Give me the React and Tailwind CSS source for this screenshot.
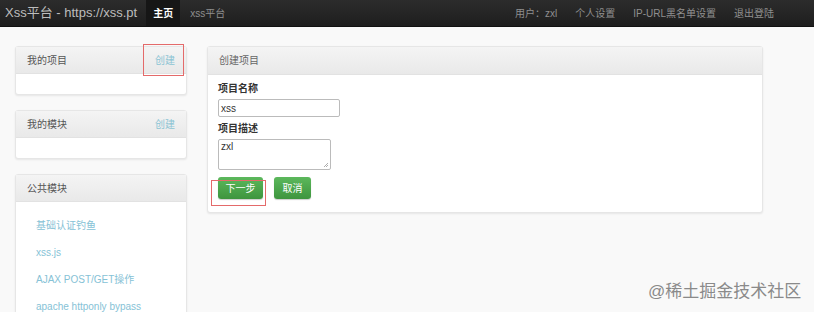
import React from "react";

const font = { fontFamily: '"Liberation Sans", "Noto Sans CJK SC", sans-serif' };

function Panel({ title, action, boxed, children, bodyClass }) {
  return (
    <div className="relative rounded-[3px] border border-[#e6e6e6] bg-white shadow-[0_1px_2px_rgba(0,0,0,0.08)]">
      <div className="flex h-[27px] items-center justify-between border-b border-[#e2e2e2] bg-gradient-to-b from-[#f4f4f4] to-[#e9e9e9] px-[11px] text-[10px] text-[#555]">
        <span>{title}</span>
        {action && <span className="text-[#8cc4d4]">{action}</span>}
      </div>
      <div className={bodyClass}>{children}</div>
      {boxed && (
        <div className="absolute left-[127px] top-[-3px] h-[32px] w-[41px] border border-[#e46a6a]" />
      )}
    </div>
  );
}

export default function App() {
  return (
    <div className="relative h-[312px] w-[814px] overflow-hidden bg-[#f9f9f9]" style={font}>
      <div className="flex h-[27px] items-center border-b border-[#111] bg-gradient-to-b from-[#2c2c2c] to-[#1e1e1e]">
        <div className="pl-[5px] pr-[7px] text-[13px] text-[#bdbdbd]">Xss平台 - https://xss.pt</div>
        <div className="ml-[2px] flex h-full w-[34px] items-center justify-center bg-[#161616] text-[10px] font-bold text-white">主页</div>
        <div className="ml-[10px] text-[10px] text-[#8f8f8f]">xss平台</div>
        <div className="ml-auto mr-[40px] flex items-center gap-[18px] text-[10px] text-[#8f8f8f]">
          <span>用户：zxl</span>
          <span>个人设置</span>
          <span>IP-URL黑名单设置</span>
          <span>退出登陆</span>
        </div>
      </div>

      <div className="flex gap-[20px] pl-[15px] pt-[19px]">
        <div className="flex w-[172px] flex-col gap-[15px]">
          <Panel title="我的项目" action="创建" boxed bodyClass="h-[20px]" />
          <Panel title="我的模块" action="创建" bodyClass="h-[20px]" />
          <Panel title="公共模块" bodyClass="flex flex-col gap-[12px] pl-[20px] pt-[16px] pb-4 text-[10px] text-[#86c2d6]">
            <span>基础认证钓鱼</span>
            <span>xss.js</span>
            <span>AJAX POST/GET操作</span>
            <span>apache httponly bypass</span>
          </Panel>
        </div>

        <div className="relative h-[167px] w-[556px] rounded-[3px] border border-[#e6e6e6] bg-white shadow-[0_1px_2px_rgba(0,0,0,0.08)]">
          <div className="flex h-[28px] items-center border-b border-[#e2e2e2] bg-gradient-to-b from-[#f4f4f4] to-[#e9e9e9] px-[11px] text-[10px] text-[#666]">
            创建项目
          </div>
          <div className="flex flex-col px-[10px] pt-[6px]">
            <label className="text-[10px] font-bold text-[#333]">项目名称</label>
            <div className="mt-[3px] flex h-[18px] w-[122px] items-center rounded-[2px] border border-[#bbb] px-[2px] text-[10px] text-[#333]">xss</div>
            <label className="mt-[4px] text-[10px] font-bold text-[#333]">项目描述</label>
            <div className="relative mt-[3px] h-[31px] w-[113px] rounded-[2px] border border-[#bbb] px-[2px] text-[10px] leading-[13px] text-[#333]">
              zxl
              <svg className="absolute bottom-[1px] right-[1px]" width="6" height="6" viewBox="0 0 6 6">
                <path d="M5 1L1 5M5 3L3 5" stroke="#999" strokeWidth="0.8" />
              </svg>
            </div>
            <div className="relative mt-[7px] flex gap-[11px]">
              <div className="flex h-[22px] w-[45px] items-center justify-center rounded-[3px] bg-gradient-to-b from-[#5cb85c] to-[#3e953e] text-[10px] text-white shadow-[0_1px_1px_rgba(0,0,0,0.2)]">下一步</div>
              <div className="flex h-[22px] w-[37px] items-center justify-center rounded-[3px] bg-gradient-to-b from-[#5cb85c] to-[#3e953e] text-[10px] text-white shadow-[0_1px_1px_rgba(0,0,0,0.2)]">取消</div>
              <div className="absolute left-[-7px] top-[3px] h-[26px] w-[55px] border border-[#e46a6a]" />
            </div>
          </div>
        </div>
      </div>

      <div className="absolute left-[648px] top-[279px] text-[17px] text-[#8a8a8a]">@稀土掘金技术社区</div>
    </div>
  );
}
